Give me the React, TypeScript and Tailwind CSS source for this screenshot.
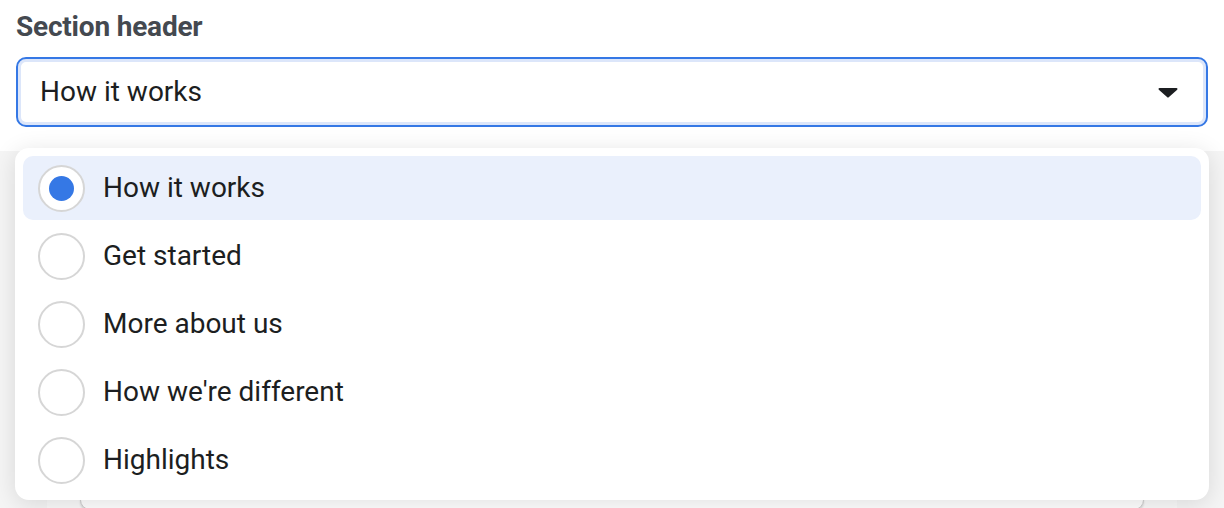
const options = ["How it works", "Get started", "More about us", "How we're different", "Highlights"];

export default function App() {
  const selected = "How it works";

  return (
    <div className="relative h-[508px] w-[1224px] overflow-hidden bg-white font-['Roboto',sans-serif]">
      {/* Field */}
      <div className="px-4 pt-[10px]">
        <div className="text-[28px] font-bold leading-[34px] tracking-[-0.2px] text-[#444950]">Section header</div>
        <div className="mt-[13px] flex h-[70px] items-center justify-between rounded-[10px] border-2 border-[#3578e5] pl-[22px] pr-[28px] shadow-[inset_0_0_0_3px_#dce6fa]">
          <span className="text-[28px] text-[#1c1e21]">{selected}</span>
          <svg width="20" height="11" viewBox="0 0 20 11">
            <path d="M1.5 1h17a1 1 0 0 1 .7 1.7l-8.5 7.6a1 1 0 0 1-1.4 0L.8 2.7A1 1 0 0 1 1.5 1z" fill="#1c1e21" />
          </svg>
        </div>
      </div>

      {/* Content behind the menu */}
      <div className="mt-[24px] h-[400px] bg-[#f5f5f5] pl-[47px] pr-[47px]">
        <div className="h-full bg-[#fafafa] px-[33px] pt-[296px]">
          <div className="h-[63px] rounded-[10px] border border-[#cfcfcf] bg-white shadow-[0_2px_2px_rgba(0,0,0,0.12)]" />
        </div>
      </div>

      {/* Open menu */}
      <div className="absolute left-[15px] top-[148px] flex w-[1194px] flex-col gap-1 rounded-[14px] bg-white p-2 shadow-[0_4px_24px_rgba(0,0,0,0.12)]">
        {options.map((o) => {
          const on = o === selected;
          return (
            <div
              key={o}
              className={`flex h-[64px] items-center gap-[18px] rounded-[10px] pl-[15px] ${on ? "bg-[#eaf0fc]" : ""}`}
            >
              <div className="flex h-[47px] w-[47px] items-center justify-center rounded-full border-2 border-[#d6d6d6] bg-white">
                {on && <div className="h-[25px] w-[25px] rounded-full bg-[#3578e5]" />}
              </div>
              <span className="text-[28px] text-[#1c1e21]">{o}</span>
            </div>
          );
        })}
      </div>
    </div>
  );
}
